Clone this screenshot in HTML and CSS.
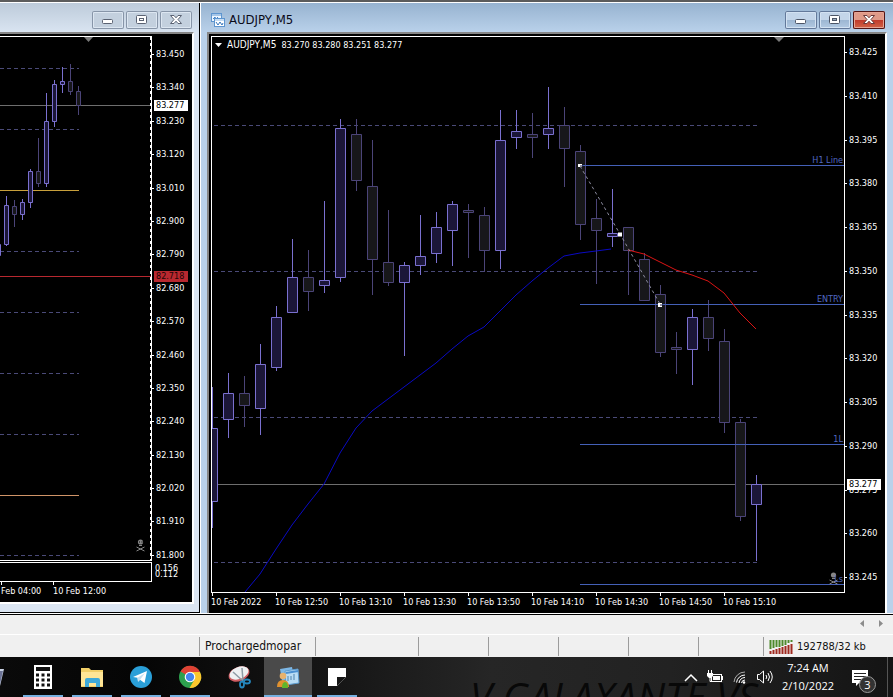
FILE: index.html
```html
<!DOCTYPE html>
<html lang="en">
<head>
    <meta charset="UTF-8">
    <meta name="viewport" content="width=device-width, initial-scale=1.0">
    <title>AUDJPY,M5</title>
    <link rel="stylesheet" href="styles.css">
</head>
<body>
    <main class="workspace">
        <section class="window inactive">
            <header class="title-bar">
                <div class="window-buttons">
                    <button aria-label="Minimize"><svg width="32" height="18"><rect x="10.500" y="8.500" width="10" height="4" rx="1" fill="#fff" stroke="#5a6272"/></svg></button>
                    <button aria-label="Restore"><svg width="32" height="18"><rect x="10.500" y="4.500" width="10" height="8" rx="1" fill="#fff" stroke="#5a6272"/><rect x="13.500" y="7.500" width="4" height="2" fill="#fff" stroke="#5a6272"/></svg></button>
                    <button aria-label="Close"><svg width="32" height="18"><path d="M10.500 4.500h3.500l2 2.300 2-2.300h3.500l-3.500 4 3.500 4H18l-2-2.300-2 2.300h-3.500l3.500-4z" fill="#fff" stroke="#5a6272"/></svg></button>
                </div>
            </header>
            <div class="client">
                <div class="plot">
                    <svg id="h1Chart" viewBox="0 37 151 523" preserveAspectRatio="none">
                        <path class="level" d="M0 68.500H79M0 129.500H79M0 251.500H79M0 312.500H79M0 373.500H79M0 434.500H79M0 555.500H79"/>
                        <path d="M0 105.500H151" stroke="#6e6e6e"/>
                        <path d="M0 190.500H79" stroke="#c8a03c"/>
                        <path d="M0 276.500H151" stroke="#b8282f"/>
                        <path d="M0 495.500H79" stroke="#d09468"/>
                        <g class="candles"></g>
                        <path d="M84 37h9l-4.500 5z" fill="#7a7a7a"/>
                        <g fill="#858585" stroke="#858585">
                            <circle cx="140.500" cy="542" r="2.600" stroke="none"/>
                            <path d="M139 545.500h3M136.500 547l8 4M144.500 547l-8 4" fill="none"/>
                            <path d="M139 542h1M141.500 542h1" stroke="#000"/>
                        </g>
                        <path d="M150.500 37V560" stroke="#fff" stroke-dasharray="3 3"/>
                    </svg>
                </div>
                <div class="price-axis">
                    <span>83.450</span><span>83.340</span><span>83.230</span><span>83.120</span>
                    <span>83.010</span><span>82.900</span><span>82.790</span><span>82.680</span>
                    <span>82.570</span><span>82.460</span><span>82.350</span><span>82.240</span>
                    <span>82.130</span><span>82.020</span><span>81.910</span><span>81.800</span>
                    <b class="price-tag bid">83.277</b>
                    <b class="price-tag stop">82.718</b>
                </div>
                <div class="indicator"></div>
                <div class="indicator-axis"><span>0.156</span><span>0.112</span></div>
                <div class="time-axis"><span>Feb 04:00</span><span>10 Feb 12:00</span></div>
            </div>
        </section>

        <section class="window active">
            <header class="title-bar">
                <svg class="chart-icon" width="14" height="14">
                    <rect x="0.500" y="0.500" width="10" height="8" fill="#eef6ff" stroke="#5d95cf"/>
                    <path d="M1 2h9" stroke="#5d95cf"/>
                    <path d="M2 6l2-2 1 2 2-2" fill="none" stroke="#4a86c5"/>
                    <rect x="3.500" y="5.500" width="10" height="8" fill="#fff" stroke="#5d95cf"/>
                    <path d="M4 7h9" stroke="#8cbcea"/>
                    <path d="M5 9l2 3 2-3 2 3 1-2" fill="none" stroke="#3778be"/>
                </svg>
                <h1>AUDJPY,M5</h1>
                <div class="window-buttons">
                    <button aria-label="Minimize"><svg width="32" height="18"><rect x="10.500" y="8.500" width="10" height="4" rx="1" fill="#fff" stroke="#4c5566"/></svg></button>
                    <button aria-label="Restore"><svg width="32" height="18"><rect x="10.500" y="4.500" width="10" height="8" rx="1" fill="#fff" stroke="#4c5566"/><rect x="13.500" y="7.500" width="4" height="2" fill="#9ab" stroke="#4c5566"/></svg></button>
                    <button class="close" aria-label="Close"><svg width="32" height="18"><path d="M10.500 4.500h3.500l2 2.300 2-2.300h3.500l-3.500 4 3.500 4H18l-2-2.300-2 2.300h-3.500l3.500-4z" fill="#fff" stroke="#6b3a3a"/></svg></button>
                </div>
            </header>
            <div class="client">
                <div class="plot">
                    <svg id="m5Chart" viewBox="212 37 632 555" preserveAspectRatio="none">
                        <path class="level" d="M214 125.500H757M214 271.500H757M214 417.500H757M214 562.500H757"/>
                        <path d="M212 484.500H844" stroke="#6e6e6e"/>
                        <g class="candles"></g>
                        <path class="entry-line" d="M580 165.500H844M580 304.500H844M580 444.500H844M580 584.500H844"/>
                        <polyline points="245,592 260,574 276,549 292,525 308,504 324,484 340,453 356,428 372,411 388,399 404,387 420,375 436,363 452,349 468,336 484,327 500,311 516,295 532,281 548,268 564,256 580,253 596,251 611,249" fill="none" stroke="#0a0ac4"/>
                        <polyline points="628,250 644,254 660,262 676,270 692,275 708,281 724,293 740,313 756,329" fill="none" stroke="#dc1414"/>
                        <path d="M580 166L620 234L660 304" fill="none" stroke="#8c8ca0" stroke-dasharray="3 3"/>
                        <path d="M578 164h4v3h-4zM618 232.500h4v4h-4zM658 303h4v4h-4z" fill="#fff"/>
                        <path d="M580 166h3M660 305h3" stroke="#224"/>
                        <path d="M774 37h10l-5 5z" fill="#7a7a7a"/>
                        <g fill="#858585" stroke="#858585">
                            <circle cx="833.500" cy="575" r="2.600" stroke="none"/>
                            <path d="M832 578.500h3M829.500 580l8 4M837.500 580l-8 4" fill="none"/>
                        </g>
                    </svg>
                    <p class="quote"><svg width="7" height="4"><path d="M0 0h7l-3.500 4z" fill="#fff"/></svg><span class="symbol">AUDJPY,M5</span><span>83.270 83.280 83.251 83.277</span></p>
                    <span class="line-label h1-line">H1 Line</span>
                    <span class="line-label entry">ENTRY</span>
                    <span class="line-label one-l">1L</span>
                    <span class="line-label one-s">Ls</span>
                </div>
                <div class="price-axis">
                    <span>83.425</span><span>83.410</span><span>83.395</span><span>83.380</span>
                    <span>83.365</span><span>83.350</span><span>83.335</span><span>83.320</span>
                    <span>83.305</span><span>83.290</span><span>83.275</span><span>83.260</span>
                    <span>83.245</span>
                    <b class="price-tag bid">83.277</b>
                </div>
                <div class="time-axis">
                    <span>10 Feb 2022</span><span>10 Feb 12:50</span><span>10 Feb 13:10</span>
                    <span>10 Feb 13:30</span><span>10 Feb 13:50</span><span>10 Feb 14:10</span>
                    <span>10 Feb 14:30</span><span>10 Feb 14:50</span><span>10 Feb 15:10</span>
                </div>
            </div>
        </section>
    </main>

    <div class="tab-strip">
        <button aria-label="Previous tab"><svg width="5" height="8"><path d="M4 0v7L0 3.500z" fill="#8c8c8c"/></svg></button>
        <button aria-label="Next tab"><svg width="5" height="8"><path d="M0 0v7l4-3.500z" fill="#8c8c8c"/></svg></button>
    </div>

    <footer class="status-bar">
        <span class="help"></span>
        <span class="profile">Prochargedmopar</span>
        <span class="date"></span>
        <span></span><span></span><span></span><span></span><span class="volume"></span>
        <span class="traffic">
            <svg width="24" height="14">
                <path d="M1.500 0v9M4.500 0v8M7.500 0v7M10.500 0v7M13.500 0v6M16.500 0v5M19.500 0v3M22.500 0v2" stroke="#4e8a2c" stroke-width="2"/>
                <path d="M1.500 11v3M4.500 10v4M7.500 9v5M10.500 8v6M13.500 7v7M16.500 6v8M19.500 5v9M22.500 4v10" stroke="#a02a20" stroke-width="2"/>
            </svg>
            192788/32 kb
        </span>
    </footer>

    <nav class="taskbar">
        <span class="wallpaper" aria-hidden="true">V GALAXANTE VS</span>
        <button class="app cut" aria-label="Recycle Bin"><svg width="28" height="28"><path d="M12 6h12l-4 17h-6z" fill="#c9d2e4"/><path d="M20 8l3 0-3 13z" fill="#6c7396"/></svg></button>
        <button class="app open" aria-label="Calculator">
            <svg width="28" height="28"><path d="M5 2h18v24H5z" fill="#fff"/><path d="M7 4h14v4H7z" fill="#111"/><path d="M7 12h14M7 17h14M7 22h14" stroke="#111" stroke-width="3" stroke-dasharray="3 2.500"/></svg>
        </button>
        <button class="app open" aria-label="File Explorer">
            <svg width="28" height="28"><path d="M3 5h8l2 2h12v17H3z" fill="#f2cf68"/><path d="M3 9h22v14H3z" fill="#ffe596"/><path d="M7 24v-7q0-2 2-2h11q2 0 2 2v7h-4v-4h-7v4z" fill="#3fa9d8"/></svg>
        </button>
        <button class="app open" aria-label="Telegram">
            <svg width="28" height="28"><circle cx="14" cy="14" r="11" fill="#2a9fd8"/><path d="M6 14l14-6-2.500 12-4.500-3.300-2 2-.5-4z" fill="#fff"/><path d="M10.500 14.700L18 10l-5 6.700-2 2z" fill="#c5e0f1"/></svg>
        </button>
        <button class="app open" aria-label="Chrome">
            <svg width="28" height="28"><circle cx="14" cy="14" r="11" fill="#2da04e"/><path d="M14 14L4.500 8.500A11 11 0 0 1 24 9z" fill="#df4234"/><path d="M14 9h10a11 11 0 0 1-10.500 16l5-8.500z" fill="#fbc72d"/><circle cx="14" cy="14" r="5.300" fill="#fff"/><circle cx="14" cy="14" r="4.200" fill="#4585ee"/></svg>
        </button>
        <button class="app" aria-label="Snipping Tool">
            <svg width="28" height="28"><ellipse cx="14" cy="11" rx="11" ry="7" transform="rotate(-22 14 11)" fill="#cf5c62"/><ellipse cx="14" cy="10" rx="10" ry="6" transform="rotate(-22 14 10)" fill="#eef0f2"/><path d="M8 9l10 9M17 5l1 13" stroke="#8e9ba5" stroke-width="1.500"/><g fill="none" stroke="#2587be" stroke-width="1.800"><ellipse cx="17" cy="21.500" rx="2" ry="3"/><ellipse cx="22" cy="18.500" rx="3" ry="2"/></g></svg>
        </button>
        <button class="app open current" aria-label="MetaTrader">
            <svg width="28" height="28"><path d="M6 6l12-2 2 11-12 3z" fill="#7db7e5"/><path d="M11 8l13-2 1 14-13 2z" fill="#b9dcf4" stroke="#5b9bcf"/><path d="M12 10l12-2" stroke="#4a8fd0" stroke-width="2"/><path d="M14 18v-5M17 17v-4M20 17v-6" stroke="#4e83ad"/><circle cx="9" cy="13" r="3.300" fill="#e8b26c"/><path d="M3 24q0-7 6-7t6 7z" fill="#e0912f"/><path d="M8 25q0-6 3-6t3 6z" fill="#5fb52c"/></svg>
        </button>
        <button class="app open" aria-label="Sticky Notes">
            <svg width="28" height="28"><path d="M5 5h18v9l-9 9H5z" fill="#fff"/><path d="M14 14h9l-9 9z" fill="#161616"/></svg>
        </button>

        <div class="tray">
            <button aria-label="Show hidden icons"><svg width="14" height="20"><path d="M1 14l6-6 6 6" fill="none" stroke="#fff" stroke-width="1.500"/></svg></button>
            <button aria-label="Battery"><svg width="18" height="20"><rect x="5.500" y="7.500" width="10" height="7" fill="none" stroke="#fff"/><path d="M7 9h7v4H7zM16 9h1v4h-1zM1 6h6v3L5 11H3L1 9z" fill="#fff"/><path d="M2.500 3v3M5.500 3v3M4 10v4.500h2" fill="none" stroke="#fff"/></svg></button>
            <button aria-label="Network"><svg width="16" height="20"><g fill="none" stroke="#fff"><path d="M2 15A11 11 0 0 1 13 5" stroke="#aaa"/><path d="M4.500 15.500A8.500 8.500 0 0 1 13 8"/><path d="M7 16a6 6 0 0 1 6-5.500"/><path d="M9.500 16a3.500 3.500 0 0 1 3.500-3"/></g><circle cx="12" cy="15.500" r="1.200" fill="#fff"/></svg></button>
            <button aria-label="Volume"><svg width="18" height="20"><g fill="none" stroke="#fff"><path d="M1.500 7.500h2l4-3.500v12l-4-3.500h-2z"/><path d="M10 8q1.500 2 0 4M12 6q3 4 0 8M14 4q4.500 6 0 12"/></g></svg></button>
        </div>
        <time class="clock"><span>7:24 AM</span><span>2/10/2022</span></time>
        <button class="notifications" aria-label="Notifications"><svg width="20" height="20"><path d="M2 3h16v13h-9l-3 3v-3H2z" fill="#fff"/><path d="M4 6.500h12M4 9.500h12M4 12.500h8" stroke="#222"/></svg><b>3</b></button>
    </nav>
    <script src="chart.js"></script>
</body>
</html>
```
FILE: styles.css
```css
* {
    box-sizing: border-box;
}
body {
    margin: 0;
    height: 100vh;
    display: flex;
    flex-direction: column;
    overflow: hidden;
    background: #f0f0f0;
    font-family: "DejaVu Sans Condensed", "Noto Sans", sans-serif;
    font-size: 9px;
    line-height: 12px;
}
button {
    margin: 0;
    padding: 0;
    border: 0;
    background: none;
    font: inherit;
}
svg {
    display: block;
}

/* mdi area */
.workspace {
    flex: 1;
    min-height: 0;
    display: flex;
    gap: 1px;
    padding-top: 1px;
    background: #fff;
    border-top: 2px solid #5c5c5c;
    border-bottom: 1px solid #000;
}
.window {
    display: flex;
    flex-direction: column;
    min-width: 0;
}
.window.inactive {
    flex: 0 0 200px;
    background: #dbe5f2;
    border-right: 1px solid #000;
    border-bottom: 1px solid #000;
    margin-bottom: 1px;
    padding: 0 5px 8px 0;
}
.window.active {
    flex: 1;
    background: #b9d1ea;
    padding: 0 6px 0 6px;
    margin-bottom: 1px;
}
.title-bar {
    flex: 0 0 29px;
    display: flex;
    align-items: center;
    padding: 4px 2px 0 4px;
}
.inactive .title-bar {
    margin-right: -5px;
    padding-right: 7px;
    background: linear-gradient(#bdcbda, #d9e4f1);
}
.active .title-bar {
    margin: 0 -6px;
    padding: 4px 8px 0 10px;
    background: linear-gradient(#97b3d0, #b9d1ea);
}
.title-bar h1 {
    margin: 0 0 0 4px;
    font-size: 13px;
    line-height: 16px;
    font-weight: normal;
    color: #0a0a18;
}
.window-buttons {
    display: flex;
    gap: 2px;
    margin-left: auto;
}
.window-buttons button {
    width: 32px;
    height: 18px;
    border-radius: 2px;
    box-shadow: inset 0 0 0 1px #8795a8, inset 0 0 0 2px #dce6f1;
    background: #c3d0de;
}
.active .window-buttons button {
    box-shadow: inset 0 0 0 1px #63799a, inset 0 0 0 2px #d3e2f2;
    background: linear-gradient(#c3d5e9 50%, #9cb6d2 50%, #b5cce4);
}
.active .window-buttons .close {
    box-shadow: inset 0 0 0 1px #501414, inset 0 0 0 2px #e7a494;
    background: linear-gradient(#e09a88 50%, #c0392a 50%, #d4684a);
}

/* chart windows */
.client {
    flex: 1;
    min-height: 0;
    display: grid;
    background: #000;
    color: #fff;
    border: solid #868686;
    border-width: 2px 0 0 0;
    padding-top: 2px;
}
.inactive .client {
    grid-template: minmax(0, 1fr) 21px 20px / 152px 1fr;
    border-right: 2px solid #fff;
    border-bottom: 2px solid #fff;
}
.active .client {
    grid-template: minmax(0, 1fr) 20px / minmax(0, 1fr) 40px;
    border-left: 2px solid #868686;
    border-right: 2px solid #fff;
    padding-left: 2px;
}
.plot {
    position: relative;
    border: solid #fff;
    border-width: 1px 1px 1px 0;
    min-height: 0;
}
.active .plot {
    border-left-width: 1px;
}
.plot > svg {
    width: 100%;
    height: 100%;
}
.level {
    stroke: #4a4a78;
    stroke-dasharray: 4 3;
}
.entry-line {
    stroke: #4460b8;
}
.bull {
    fill: #1b1638;
    stroke: #7a70d0;
}
.bear {
    fill: #17171a;
    stroke: #4b4478;
}
.quote {
    position: absolute;
    left: 3px;
    top: 2px;
    margin: 0;
    display: flex;
    align-items: center;
    gap: 5px;
}
.quote .symbol {
    font-size: 10px;
}
.line-label {
    position: absolute;
    right: 1px;
    color: #5068c0;
}
.h1-line {
    top: 117px;
}
.entry {
    top: 256px;
}
.one-l {
    top: 396px;
}
.one-s {
    top: 536px;
}

.price-axis {
    position: relative;
    display: flex;
    flex-direction: column;
    justify-content: space-between;
    padding: 10px 0 10px 4px;
}
.inactive .price-axis {
    padding: 12px 0 0 4px;
}
.price-axis span {
    position: relative;
}
.price-axis span::before {
    content: "";
    position: absolute;
    left: -4px;
    top: 6px;
    width: 2px;
    height: 1px;
    background: #fff;
}
.price-tag {
    position: absolute;
    left: 2px;
    width: 34px;
    height: 11px;
    padding-left: 2px;
    line-height: 11px;
    font-weight: normal;
}
.bid {
    top: 443px;
    background: #fff;
    color: #000;
}
.inactive .bid {
    top: 64px;
}
.stop {
    top: 235px;
    background: #b8282f;
    color: #1c0606;
}
.indicator {
    margin-top: 1px;
    border: solid #fff;
    border-width: 1px 1px 1px 0;
}
.indicator-axis {
    display: flex;
    flex-direction: column;
    padding: 4px 0 0 3px;
}
.indicator-axis span {
    line-height: 6px;
}
.time-axis {
    grid-column: 1 / -1;
    display: flex;
    white-space: nowrap;
}
.time-axis span {
    position: relative;
    flex: 0 0 64px;
    padding-top: 3px;
}
.inactive .time-axis span {
    flex: 0 0 52px;
    padding-left: 1px;
}
.time-axis span::before {
    content: "";
    position: absolute;
    left: 1px;
    top: 0;
    width: 1px;
    height: 3px;
    background: #fff;
}

/* tabs and status bar */
.tab-strip {
    flex: 0 0 20px;
    display: flex;
    justify-content: flex-end;
    align-items: center;
    gap: 14px;
    padding: 0 9px 2px 0;
    border-bottom: 1px solid #fff;
}
.status-bar {
    flex: 0 0 22px;
    display: flex;
    padding: 2px 0 1px;
    color: #111;
    font-size: 12px;
    line-height: 19px;
}
.status-bar span {
    flex: 0 0 70px;
    border-right: 1px solid #9c9c9c;
}
.status-bar .help {
    flex: 1;
}
.status-bar .profile {
    flex: 0 0 116px;
    padding-left: 5px;
}
.status-bar .date {
    flex: 0 0 103px;
}
.status-bar .volume {
    flex: 0 0 65px;
}
.status-bar .traffic {
    flex: 0 0 129px;
    display: flex;
    align-items: center;
    gap: 4px;
    padding-left: 5px;
    border: 0;
    font-size: 11px;
}

/* taskbar */
.taskbar {
    position: relative;
    flex: 0 0 40px;
    display: flex;
    overflow: hidden;
    background: linear-gradient(90deg, #0a0a0a, #050505 15%, #161616 38%, #262626 55%, #222 75%, #141414);
    color: #fff;
    font-family: "Open Sans", "Noto Sans", sans-serif;
}
.wallpaper {
    position: absolute;
    left: 470px;
    top: 20px;
    font-size: 40px;
    line-height: 40px;
    font-style: italic;
    white-space: pre;
    color: #080808;
}
.app {
    position: relative;
    flex: 0 0 48px;
    height: 40px;
    margin-right: 1px;
    display: flex;
    align-items: center;
    justify-content: center;
}
.app.cut {
    margin-left: -30px;
}
.app.open::after {
    content: "";
    position: absolute;
    left: 4px;
    right: 4px;
    bottom: 0;
    height: 2px;
    background: #76b0e0;
}
.app.current {
    background: #4a4a4a;
}
.app.current::after {
    left: 0;
    right: 0;
}
.tray {
    position: relative;
    display: flex;
    align-items: center;
    gap: 8px;
    margin-left: auto;
}
.clock {
    position: relative;
    width: 68px;
    display: flex;
    flex-direction: column;
    justify-content: center;
    text-align: center;
    font-size: 11px;
    line-height: 18px;
}
.notifications {
    position: relative;
    width: 46px;
    padding-left: 8px;
    margin-right: 5px;
    border-right: 1px solid #555;
    color: #fff;
}
.notifications b {
    position: absolute;
    left: 17px;
    top: 19px;
    width: 17px;
    height: 17px;
    border: 1px solid #999;
    border-radius: 50%;
    background: #333;
    font-size: 11px;
    line-height: 15px;
    font-weight: normal;
}
```
FILE: chart.js
```js
// x, high, low, body top, body bottom, up
const m5 = [
    [212, 387, 527, 428, 501, 1], [228, 373, 437, 393, 419, 1], [244, 376, 426, 393, 405, 0],
    [260, 344, 434, 364, 408, 1], [276, 306, 370, 317, 367, 1], [292, 239, 312, 277, 312, 1],
    [308, 250, 310, 277, 291, 0], [324, 201, 292, 280, 285, 1], [340, 119, 281, 128, 277, 1],
    [356, 119, 190, 134, 180, 0], [372, 140, 294, 186, 259, 0], [388, 210, 285, 262, 282, 0],
    [404, 262, 355, 265, 282, 1], [420, 215, 274, 256, 265, 1], [436, 212, 262, 227, 253, 1],
    [452, 201, 265, 204, 230, 1], [468, 204, 257, 210, 212, 0], [484, 207, 271, 215, 250, 0],
    [500, 110, 268, 140, 250, 1], [516, 110, 148, 131, 137, 1], [532, 113, 157, 134, 137, 0],
    [548, 87, 148, 128, 134, 1], [564, 107, 186, 125, 148, 0], [580, 145, 239, 151, 224, 0],
    [596, 199, 283, 218, 230, 0], [612, 189, 246, 233, 236, 1], [628, 227, 294, 227, 250, 0],
    [644, 253, 300, 259, 300, 0], [660, 285, 356, 294, 352, 0], [676, 332, 373, 347, 349, 0],
    [692, 309, 384, 317, 349, 1], [708, 300, 350, 317, 338, 0], [724, 329, 432, 341, 422, 0],
    [740, 419, 520, 422, 516, 0], [756, 475, 560, 484, 504, 1]
];
const h1 = [
    [-2, 244, 256, 244, 255, 1], [6, 196, 245, 205, 244, 1], [14, 200, 226, 206, 214, 0],
    [22, 199, 219, 202, 214, 1], [30, 169, 207, 171, 202, 1], [38, 138, 186, 171, 183, 0],
    [46, 93, 186, 121, 183, 1], [54, 80, 126, 84, 121, 1], [62, 67, 92, 81, 84, 1],
    [70, 64, 94, 81, 91, 0], [78, 86, 114, 91, 105, 0]
];

function drawCandles(id, data, half) {
    const group = document.querySelector('#' + id + ' .candles');
    data.forEach(function([x, high, low, top, bottom, up]) {
        const path = document.createElementNS('http://www.w3.org/2000/svg', 'path');
        const c = x + 0.5;
        path.setAttribute('class', up ? 'bull' : 'bear');
        path.setAttribute('d', `M${c} ${high}V${top}M${c} ${bottom}V${low + 1}` +
            `M${c - half} ${top + 0.5}h${half * 2}V${bottom + 0.5}h${-half * 2}z`);
        group.appendChild(path);
    });
}

drawCandles('m5Chart', m5, 5);
drawCandles('h1Chart', h1, 2);
```
